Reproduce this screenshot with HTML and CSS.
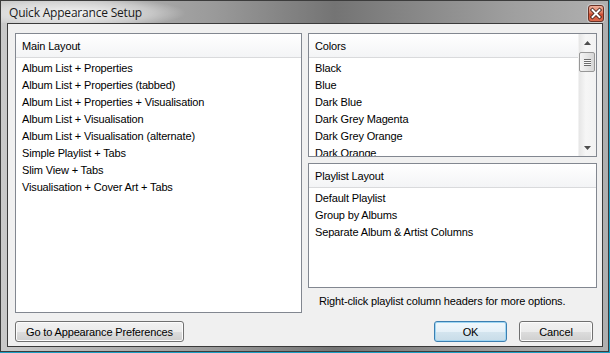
FILE: index.html
```html
<!DOCTYPE html>
<html lang="en">
<head>
  <meta charset="UTF-8">
  <title>Quick Appearance Setup</title>
  <link rel="stylesheet" href="styles.css">
</head>
<body>
  <div class="window">
    <div class="titlebar">
      <span class="title">Quick Appearance Setup</span>
      <span class="close">
        <svg width="16" height="17" viewBox="0 0 16 17">
          <path d="M4.5 5 L11.5 12 M11.5 5 L4.5 12" stroke="#3a1a14" stroke-width="3.6" stroke-linecap="square"/>
          <path d="M4.5 5 L11.5 12 M11.5 5 L4.5 12" stroke="#ffffff" stroke-width="2" stroke-linecap="square"/>
        </svg>
      </span>
    </div>
    <div class="client">
      <div class="panels">
        <div class="box main">
          <div class="head">Main Layout</div>
          <ul class="items">
            <li>Album List + Properties</li>
            <li>Album List + Properties (tabbed)</li>
            <li>Album List + Properties + Visualisation</li>
            <li>Album List + Visualisation</li>
            <li>Album List + Visualisation (alternate)</li>
            <li>Simple Playlist + Tabs</li>
            <li>Slim View + Tabs</li>
            <li>Visualisation + Cover Art + Tabs</li>
          </ul>
        </div>
        <div class="side">
          <div class="box colors">
            <div class="listarea">
              <div class="head">Colors</div>
              <ul class="items">
                <li>Black</li>
                <li>Blue</li>
                <li>Dark Blue</li>
                <li>Dark Grey Magenta</li>
                <li>Dark Grey Orange</li>
                <li>Dark Orange</li>
              </ul>
            </div>
            <div class="scrollbar">
              <div class="arrow">
                <svg width="7" height="4" viewBox="0 0 7 4"><path d="M0 4 L3.5 0 L7 4 Z" fill="#4d4d4d"/></svg>
              </div>
              <div class="thumb"><span class="grip"></span></div>
              <div class="track"></div>
              <div class="arrow">
                <svg width="7" height="4" viewBox="0 0 7 4"><path d="M0 0 L3.5 4 L7 0 Z" fill="#4d4d4d"/></svg>
              </div>
            </div>
          </div>
          <div class="box playlist">
            <div class="head">Playlist Layout</div>
            <ul class="items">
              <li>Default Playlist</li>
              <li>Group by Albums</li>
              <li>Separate Album &amp; Artist Columns</li>
            </ul>
          </div>
          <p class="hint">Right-click playlist column headers for more options.</p>
        </div>
      </div>
      <div class="buttons">
        <button class="btn wide">Go to Appearance Preferences</button>
        <div class="actions">
          <button class="btn default">OK</button>
          <button class="btn">Cancel</button>
        </div>
      </div>
    </div>
  </div>
</body>
</html>
```

FILE: styles.css
```css
body {
  margin: 0;
  width: 610px;
  height: 353px;
  background: #1e9fc4;
  font-family: "Liberation Sans", Arial, sans-serif;
  font-size: 11px;
  letter-spacing: -0.15px;
  color: #000;
  overflow: hidden;
}
.window {
  box-sizing: border-box;
  width: 609px;
  height: 352px;
  border: 1px solid #3c3c3c;
  padding: 0 5px 4px 6px;
  background: linear-gradient(to right, #c9c9c9 0%, #9a9a9a 35%, #747474 55%, #a0a0a0 85%, #b0b0b0 100%);
  display: flex;
  flex-direction: column;
}
.titlebar {
  height: 22px;
  display: flex;
  align-items: center;
  justify-content: space-between;
  background: radial-gradient(ellipse 110px 16px at 75px 12px, rgba(255,255,255,0.85) 0%, rgba(255,255,255,0.35) 70%, rgba(255,255,255,0) 100%);
  margin: 0 -6px 0 -6px;
  padding: 0 5px 0 8px;
}
.title {
  font-family: "Open Sans", "Noto Sans", sans-serif;
  font-size: 12px;
  color: #1a1a1a;
  letter-spacing: -0.2px;
}
.close {
  width: 16px;
  height: 17px;
  margin-top: 3px;
  box-sizing: border-box;
  border: 1px solid #6a3024;
  border-radius: 3px;
  background: linear-gradient(#eeb09b 0%, #de7a60 45%, #cc4d33 55%, #dc6c4f 100%);
  box-shadow: 0 0 0 1px rgba(255,255,255,0.35);
  display: flex;
}
.close svg {
  margin: -1px;
}
.client {
  flex: 1;
  border: 1px solid #3a3a3a;
  background: #f0f0f0;
  padding: 9px 4px 0 7px;
}
.panels {
  display: grid;
  grid-template-columns: 287px 289px;
  column-gap: 6px;
}
.box {
  box-sizing: border-box;
  border: 1px solid #828790;
  background: #fff;
  overflow: hidden;
}
.main {
  height: 280px;
}
.side {
  display: flex;
  flex-direction: column;
}
.colors {
  height: 124px;
  display: flex;
}
.playlist {
  height: 125px;
  margin-top: 6px;
}
.listarea {
  flex: 1;
  overflow: hidden;
}
.head {
  height: 21px;
  line-height: 21px;
  padding: 2px 0 0 6px;
  background: linear-gradient(#ffffff, #f3f4f6);
  border-bottom: 1px solid #d9dadc;
}
.items {
  list-style: none;
  margin: 0;
  padding: 2px 0 0 0;
}
.items li {
  height: 17px;
  line-height: 17px;
  padding-left: 6px;
  white-space: nowrap;
}
.scrollbar {
  width: 17px;
  display: flex;
  flex-direction: column;
  background: linear-gradient(to right, #e6e6e6, #f6f6f6 40%, #f2f2f2);
  border-left: 1px solid #f2f2f2;
}
.arrow {
  height: 17px;
  display: flex;
  align-items: center;
  justify-content: center;
}
.thumb {
  height: 20px;
  margin: 1px 1px 0 0;
  box-sizing: border-box;
  border: 1px solid #979797;
  border-radius: 2px;
  background: linear-gradient(to right, #f4f4f4, #e6e6e6 50%, #d6d6d6);
  display: flex;
  align-items: center;
  justify-content: center;
}
.grip {
  width: 7px;
  height: 7px;
  background: repeating-linear-gradient(#6c6c6c 0 1px, #f8f8f8 1px 2px);
}
.track {
  flex: 1;
}
.hint {
  margin: 7px 0 0 0;
  padding-left: 11px;
  line-height: 13px;
  white-space: nowrap;
}
.buttons {
  margin-top: 8px;
  display: flex;
  justify-content: space-between;
  padding-right: 5px;
}
.actions {
  display: flex;
  gap: 12px;
}
.btn {
  height: 21px;
  width: 74px;
  padding: 0;
  font-family: inherit;
  font-size: 11px;
  letter-spacing: -0.15px;
  color: #000;
  border: 1px solid #707070;
  border-radius: 3px;
  background: linear-gradient(#f2f2f2 0%, #ebebeb 50%, #dddddd 51%, #cfcfcf 100%);
  box-shadow: inset 0 0 0 1px #fcfcfc;
}
.wide {
  width: 169px;
}
.default {
  width: 73px;
  border-color: #3c7fb1;
  background: linear-gradient(#f1f8fc 0%, #e6f1f8 50%, #d4e5ef 51%, #c8dce8 100%);
  box-shadow: inset 0 0 0 1px #9fd6f3;
}
```
